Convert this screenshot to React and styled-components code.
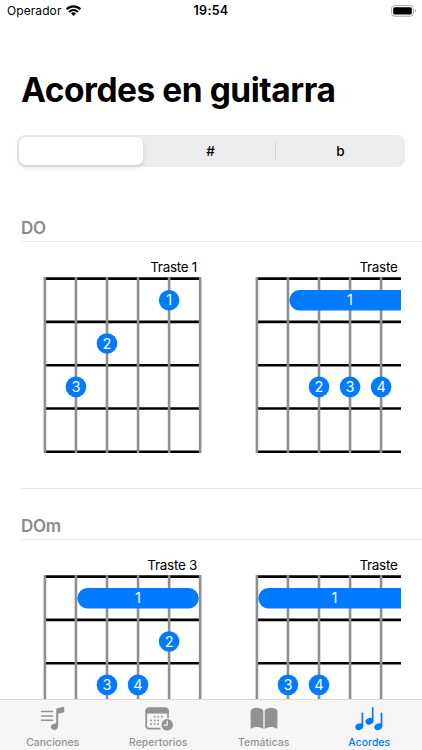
import styled, { createGlobalStyle } from 'styled-components';

const GlobalStyle = createGlobalStyle`
  * {
    box-sizing: border-box;
  }

  body {
    margin: 0;
    background: #fff;
    color: #000;
    font-family: Inter, 'Liberation Sans', sans-serif;
    overflow: hidden;
  }
`;

const Screen = styled.div`
  display: flex;
  flex-direction: column;
  width: 422px;
  height: 750px;
  overflow: hidden;
  background: #fff;
`;

const StatusBar = styled.header`
  display: grid;
  grid-template-columns: 1fr auto 1fr;
  align-items: center;
  flex: none;
  height: 21px;
  padding: 0 7px;
`;

const Carrier = styled.div`
  display: flex;
  align-items: center;
  gap: 4.5px;
  font-size: 12px;
  letter-spacing: 0.08px;
`;

const Clock = styled.time`
  font-size: 12.5px;
  font-weight: 600;
  letter-spacing: 0.3px;
`;

const BatteryIcon = styled.svg`
  justify-self: end;
  margin-right: -2px;
`;

const Content = styled.main`
  flex: 1;
  min-height: 0;
  overflow: hidden;
`;

const Title = styled.h1`
  margin: 47px 0 0 21px;
  font-size: 33.5px;
  line-height: 44px;
  font-weight: 700;
  letter-spacing: -0.47px;
  white-space: nowrap;
`;

const Segments = styled.div`
  display: grid;
  grid-template-columns: 124px 133px 1fr;
  width: 388px;
  height: 32px;
  margin: 23px 0 0 17px;
  padding: 2px 0 2px 2px;
  border-radius: 8px;
  background: #ededef;
`;

const Segment = styled.button`
  display: flex;
  align-items: center;
  justify-content: center;
  margin: ${({ $divider }) => ($divider ? '5px 0' : '0')};
  padding: ${({ $divider }) => ($divider ? '0 0 0 3px' : '0')};
  border: 0;
  border-right: ${({ $divider }) => ($divider ? '1px solid #d3d3d6' : '0')};
  border-radius: ${({ $active }) => ($active ? '7px' : '0')};
  background: ${({ $active }) => ($active ? '#fff' : 'transparent')};
  box-shadow: ${({ $active }) => ($active ? '0 2px 5px rgba(0, 0, 0, 0.14)' : 'none')};
  color: #000;
  font-family: inherit;
  font-size: 13.5px;
  font-weight: 500;
`;

const Sections = styled.div`
  padding: 51px 0 0 21px;
`;

const Section = styled.section`
  height: 297.5px;
`;

const SectionTitle = styled.h2`
  height: 24px;
  margin: 0;
  border-bottom: 1px solid #e9e9ea;
  color: #8a8a8e;
  font-size: 17px;
  line-height: 20px;
  font-weight: 600;
  letter-spacing: -0.3px;
`;

const Carousel = styled.div`
  display: flex;
  gap: 48px;
  height: 246px;
  width: 380px;
  padding: 17px 0 0 22px;
  overflow: hidden;
`;

const SectionEnd = styled.hr`
  height: 1px;
  margin: 0;
  border: 0;
  background: #e9e9ea;
`;

const Diagram = styled.figure`
  flex: none;
  width: 163.5px;
  margin: 0;
`;

const FretLabel = styled.figcaption`
  padding-right: ${({ $short }) => ($short ? '20.5px' : '9.5px')};
  font-size: 13.5px;
  line-height: 17px;
  text-align: right;
  white-space: nowrap;
  letter-spacing: -0.3px;
`;

const Board = styled.svg`
  display: block;
  font-size: 14.5px;
  text-anchor: middle;
`;

const TabBar = styled.nav`
  display: grid;
  grid-template-columns: repeat(4, 1fr);
  flex: none;
  height: 51px;
  border-top: 1px solid #d8d8d8;
  background: #f6f6f6;
`;

const Tab = styled.a`
  display: flex;
  flex-direction: column;
  align-items: center;
  padding-top: 5px;
  color: ${({ $active }) => ($active ? '#007aff' : '#929292')};
  font-size: 10.4px;
  line-height: 14px;
  font-weight: 500;
  letter-spacing: 0.05px;

  svg {
    display: block;
    margin-bottom: 5px;
  }
`;

const STRING_GAP = 31.05;
const FRET_GAP = 43.3;
const LEFT = 1.9;
const TOP = 2.6;

const stringX = (n) => LEFT + n * STRING_GAP;
const fretY = (n) => TOP + n * FRET_GAP;

// Strings are counted from 0 on the left, frets from 0 at the top
const chords = [
  {
    name: 'DO',
    positions: [
      {
        fret: 1,
        dots: [
          { finger: 1, string: 4, fret: 0 },
          { finger: 2, string: 2, fret: 1 },
          { finger: 3, string: 1, fret: 2 },
        ],
      },
      {
        barre: { from: 1, to: 5 },
        dots: [
          { finger: 2, string: 2, fret: 2 },
          { finger: 3, string: 3, fret: 2 },
          { finger: 4, string: 4, fret: 2 },
        ],
      },
    ],
  },
  {
    name: 'DOm',
    positions: [
      {
        fret: 3,
        barre: { from: 1, to: 5 },
        dots: [
          { finger: 2, string: 4, fret: 1 },
          { finger: 3, string: 2, fret: 2 },
          { finger: 4, string: 3, fret: 2 },
        ],
      },
      {
        barre: { from: 0, to: 5 },
        dots: [
          { finger: 3, string: 1, fret: 2 },
          { finger: 4, string: 2, fret: 2 },
        ],
      },
    ],
  },
];

const ChordDiagram = ({ fret, barre, dots }) => (
  <Diagram>
    <FretLabel $short={!fret}>Traste {fret}</FretLabel>
    <Board width="163.5" height="182" viewBox="0 0 163.5 182">
      {[0, 1, 2, 3, 4].map((n) => (
        <line key={n} x1={stringX(0)} x2={stringX(5)} y1={fretY(n)} y2={fretY(n)} stroke="#000" strokeWidth="2.6" />
      ))}
      {[0, 1, 2, 3, 4, 5].map((n) => (
        <line key={n} x1={stringX(n)} x2={stringX(n)} y1={fretY(0) - 1.5} y2={fretY(4) + 1.3} stroke="#8e8e93" strokeWidth="2.6" />
      ))}
      {barre && (
        <g>
          <rect
            x={stringX(barre.from) + 1.4}
            y={fretY(0.5) - 10.2}
            width={(barre.to - barre.from) * STRING_GAP - 2.8}
            height="20.4"
            rx="10.2"
            fill="#007aff"
          />
          <text x={stringX((barre.from + barre.to) / 2)} y={fretY(0.5) + 5.2} fill="#fff">1</text>
        </g>
      )}
      {dots.map((dot) => (
        <g key={dot.finger}>
          <circle cx={stringX(dot.string)} cy={fretY(dot.fret + 0.5)} r="10.3" fill="#007aff" />
          <text x={stringX(dot.string)} y={fretY(dot.fret + 0.5) + 5.2} fill="#fff">{dot.finger}</text>
        </g>
      ))}
    </Board>
  </Diagram>
);

const SongsIcon = () => (
  <svg width="26" height="26" viewBox="0 0 26 26" fill="currentColor">
    <path d="M1.5 6.6h11M1.5 10.9h11M1.5 15.2h11" stroke="currentColor" strokeWidth="1.5" strokeLinecap="round" />
    <path d="M16.2 4.6c0-.8.4-1.2 1.1-1.4l6-1.3c.6-.1 1 .2 1 .8v3.8c0 .6-.3 1-.9 1.1l-5.2 1.2v12.1c0 2.6-1.8 4-4.1 4-2 0-3.3-1.2-3.3-2.8 0-1.7 1.2-2.8 3.1-3.2l1.4-.3c.6-.1.9-.5.9-1z" />
  </svg>
);

const RepertoireIcon = () => (
  <svg width="30" height="26" viewBox="-1 0 30 26" fill="currentColor">
    <path d="M16.4 23.7H5.1c-1.9 0-2.9-1-2.9-2.9V6.3c0-1.9 1-2.9 2.9-2.9h16c1.9 0 2.9 1 2.9 2.9v7" fill="none" stroke="currentColor" strokeWidth="1.7" />
    <path d="M1.4 8.5V6.3c0-2.4 1.4-3.8 3.8-3.8h15.9c2.4 0 3.7 1.4 3.7 3.8v2.2z" />
    {[[10.6, 11.6], [14.2, 11.6], [17.8, 11.6], [7, 15.3], [10.6, 15.3], [14.2, 15.3], [7, 19], [10.6, 19], [14.2, 19]].map(([x, y]) => (
      <rect key={`${x}-${y}`} x={x - 0.8} y={y - 0.8} width="1.7" height="1.7" rx="0.4" />
    ))}
    <circle cx="23.2" cy="19.8" r="6.7" fill="#f6f6f6" />
    <circle cx="23.2" cy="19.8" r="5.8" />
    <path d="M23.2 16.1v4.1H20" fill="none" stroke="#f6f6f6" strokeWidth="1.2" strokeLinecap="round" />
  </svg>
);

const TopicsIcon = () => (
  <svg width="28" height="26" viewBox="0 0.5 28 26" fill="currentColor">
    <path d="M.6 5.9C2 4.2 4.4 3.2 7 3.2c2.7 0 4.9 1 6.3 2.7v18.500c-1.600-1.300-3.700-2-6.300-2-2.200 0-3.900.6-5.300 1.700-.7.5-1.100.2-1.100-.5z" />
    <path d="M27.4 5.9C26 4.2 23.6 3.2 21 3.2c-2.700 0-4.900 1-6.300 2.700v18.500c1.600-1.300 3.700-2 6.300-2 2.200 0 3.900.6 5.300 1.700.7.5 1.100.2 1.100-.5z" />
  </svg>
);

const ChordsIcon = () => (
  <svg width="28" height="26" viewBox="0 0 28 26" fill="currentColor">
    {[[0.2, 8.1], [10.5, 2.6], [19.3, 8.1]].map(([x, y]) => (
      <g key={x} transform={`translate(${x} ${y})`}>
        <ellipse cx="4" cy="13.7" rx="4" ry="3.2" transform="rotate(-22 4 13.7)" />
        <path d="M7.2 .2v12.800" stroke="currentColor" strokeWidth="1.7" strokeLinecap="round" />
      </g>
    ))}
  </svg>
);

const tabs = [
  { name: 'Canciones', Icon: SongsIcon },
  { name: 'Repertorios', Icon: RepertoireIcon },
  { name: 'Temáticas', Icon: TopicsIcon },
  { name: 'Acordes', Icon: ChordsIcon, active: true },
];

export default function App() {
  return (
    <Screen>
      <GlobalStyle />
      <StatusBar>
        <Carrier>
          Operador
          <svg width="15" height="11" viewBox="0 0 15 11" fill="none" stroke="#000" strokeWidth="2.2">
            <path d="M.7 4.2a9.5 9.5 0 0 1 13.6 0M3.1 6.9a6.1 6.1 0 0 1 8.8 0" />
            <path d="M7.5 11 5 8.6a3.5 3.5 0 0 1 5 0z" fill="#000" stroke="none" />
          </svg>
        </Carrier>
        <Clock>19:54</Clock>
        <BatteryIcon width="26" height="12" viewBox="0 0 26 12">
          <rect x="0.6" y="0.6" width="21.8" height="10.6" rx="3" fill="none" stroke="#a5a5a5" />
          <rect x="2.2" y="2.2" width="18.6" height="7.4" rx="1.5" />
          <path d="M23.8 4v3.8c1.6-.6 1.6-3.2 0-3.8z" fill="#a5a5a5" />
        </BatteryIcon>
      </StatusBar>
      <Content>
        <Title>Acordes en guitarra</Title>
        <Segments>
          <Segment $active aria-label="Natural" />
          <Segment $divider>#</Segment>
          <Segment>b</Segment>
        </Segments>
        <Sections>
          {chords.map((chord) => (
            <Section key={chord.name}>
              <SectionTitle>{chord.name}</SectionTitle>
              <Carousel>
                {chord.positions.map((position, index) => (
                  <ChordDiagram key={index} {...position} />
                ))}
              </Carousel>
              <SectionEnd />
            </Section>
          ))}
        </Sections>
      </Content>
      <TabBar>
        {tabs.map(({ name, Icon, active }) => (
          <Tab key={name} $active={active}>
            <Icon />
            {name}
          </Tab>
        ))}
      </TabBar>
    </Screen>
  );
}
